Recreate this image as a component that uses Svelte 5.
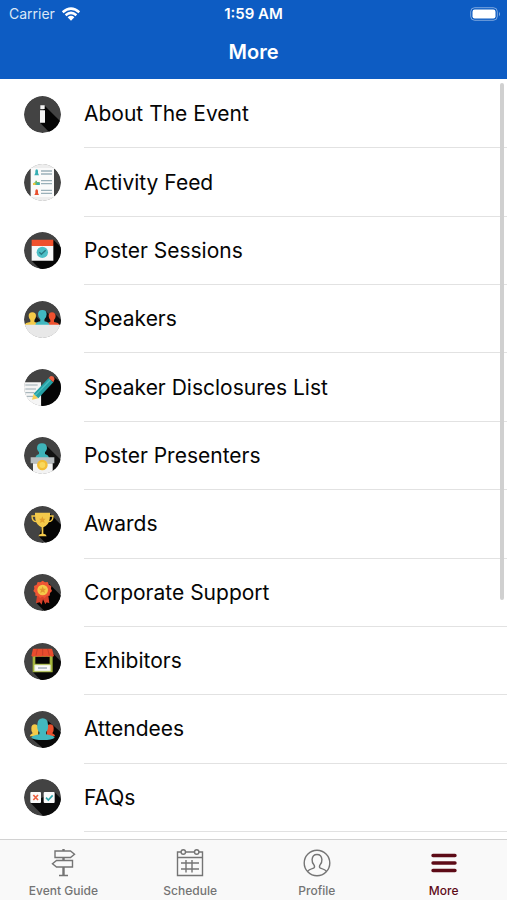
<script>
  const rows = [
    ['about', 'About The Event'],
    ['feed', 'Activity Feed'],
    ['sessions', 'Poster Sessions'],
    ['speakers', 'Speakers'],
    ['disclosures', 'Speaker Disclosures List'],
    ['presenters', 'Poster Presenters'],
    ['awards', 'Awards'],
    ['support', 'Corporate Support'],
    ['exhibitors', 'Exhibitors'],
    ['attendees', 'Attendees'],
    ['faqs', 'FAQs']
  ];
  const tabs = ['Event Guide', 'Schedule', 'Profile', 'More'];
</script>

{#snippet art(name)}
  {#if name === 'about'}
    <path d="M62 29L124 91L91 124L48 80Z" fill="#050505" />
    <path d="M49 28h13v11H49zM48 43h15v37H48z" fill="#f4f4f4" />
  {:else if name === 'feed'}
    <path d="M0 0h111v14H0zM0 97h111v14H0z" fill="#ededed" />
    <path d="M20 12h70v87H20z" fill="#fafafa" />
    <path d="M34 21q0-5 4-5t4 5v6l3 7H31l3-7z" fill="#35aeb4" />
    <path d="M27 63q0-9 7-8v-5h5v4h8v9z" fill="#6fb96a" />
    <path d="M27 63v-6h7v6z" fill="#f3c63f" />
    <path d="M38 56h9v7h-9z" fill="#35aeb4" />
    <path d="M34 81q0-5 4-5t4 5v6l3 6H31l3-6z" fill="#e8502f" />
    <path d="M51 21h33M51 30h33M51 50h33M51 59h33M51 79h33M51 88h33" stroke="#9ab0b9" stroke-width="4" />
  {:else if name === 'sessions'}
    <path d="M88 23L130 65V130H67L23 86Z" fill="#050505" />
    <path d="M23 41h65v45H23z" fill="#f7f7f7" />
    <path d="M23 23h65v19H23z" fill="#f0512d" />
    <circle cx="55" cy="61" r="17" fill="#4dbfc6" />
    <path d="M46 61l6 6l13-12" fill="none" stroke="#287780" stroke-width="4" />
  {:else if name === 'speakers'}
    <path d="M35 45l25 25H30zM65 30l40 40H60zM91 37l30 30v5H80z" fill="#111" />
    <path d="M2 72q1-7 17-9v-6q-5-5-5-12q0-11 11-11t11 11q0 7-5 12v6q13 2 14 9z" fill="#f5cb48" />
    <path d="M66 72q1-7 13-9v-6q-5-5-5-12q0-11 10-11t11 11q0 7-5 12v6q15 2 16 9z" fill="#ee512f" />
    <path d="M34 72q1-9 15-11v-6q-7-6-7-15q0-13 13-13t13 13q0 9-7 15v6q14 2 15 11z" fill="#41b8c0" />
    <path d="M0 71h111v40H0z" fill="#e8e8e8" />
  {:else if name === 'disclosures'}
    <path d="M90 25L130 55V130H52V70Z" fill="#050505" />
    <path d="M0 40h51v71H0z" fill="#f5f5f5" />
    <path d="M4 48h37M4 60h32M4 71h27M9 82h18" stroke="#9babb2" stroke-width="3" />
    <path d="M24 92l5-18l14 14z" fill="#f5ce58" />
    <path d="M29 74L74 27l14 13l-45 48z" fill="#24a0a4" />
    <path d="M34 79L79 32" stroke="#49bec1" stroke-width="4" />
    <path d="M74 27l5-5q10-3 13 8l-4 10z" fill="#ee6042" />
  {:else if name === 'presenters'}
    <path d="M66 25L125 83V111H86V64H60Z" fill="#111" />
    <path d="M34 63q1-9 11-12v-5q-6-6-6-12q0-15 15-15t15 15q0 6-6 12v5q11 3 12 12z" fill="#3eb3b9" />
    <path d="M27 79h59v32H27z" fill="#f3f3f3" />
    <path d="M20 61h71v18H20z" fill="#b9bec0" />
    <circle cx="55" cy="84" r="16" fill="#f3bd35" />
    <circle cx="55" cy="84" r="9" fill="#f9d85c" />
  {:else if name === 'awards'}
    <path d="M76 21L130 75V130H85L44 91L55 65Z" fill="#050505" />
    <path d="M35 30H24q0 17 14 17M75 30h12q0 17-14 17" fill="none" stroke="#f3c745" stroke-width="4" />
    <path d="M33 20h45v8q0 24-13 32l-7 4v19q9 1 10 8H43q1-7 10-8V64l-7-4Q33 52 33 28z" fill="#f4c94b" />
    <path d="M55 31l3 7h7l-5 5l2 8l-7-4l-7 4l2-8l-5-5h7z" fill="#e1a12e" />
  {:else if name === 'support'}
    <path d="M76 30L130 83V130H80L38 88Z" fill="#050505" />
    <path d="M40 58l-4 30l11-3l6 7l4-16l7 15l4-6l8 3l-4-31z" fill="#d8412a" />
    <path d="M56 20l7 5l8-1l3 8l8 4l-1 8l3 7l-6 6l-1 8l-9 1l-6 6l-7-4l-7 4l-5-6l-9-1v-8l-6-6l3-7l-1-8l8-4l3-8l8 1z" fill="#ef5534" />
    <circle cx="56" cy="48" r="16" fill="#f5ca49" />
    <path d="M56 37l3 7h8l-6 5l2 8l-7-4l-7 4l2-8l-6-5h8z" fill="#e19a2e" />
  {:else if name === 'exhibitors'}
    <path d="M88 32L130 75V130H68L27 88Z" fill="#080808" />
    <path d="M26 38h60v50H26z" fill="#a4b63c" />
    <path d="M34 41h43v21H34z" fill="#050505" />
    <path d="M31 65h49v20H31z" fill="#e9eedb" />
    <path d="M34 68h43v14H34z" fill="#fafafa" />
    <path d="M42 75h27" stroke="#a4afba" stroke-width="5" />
    <path d="M27 17h57l6 22q-5 5-11 0q-6 5-11 0q-6 5-12 0q-6 5-11 0q-6 5-11 0q-6 5-12 0z" fill="#e94c2e" />
    <path d="M40 18l-4 19M56 18v19M71 18l5 19" stroke="#c63d2a" stroke-width="3" />
  {:else if name === 'attendees'}
    <path d="M72 30L130 80V130H78L25 84Z" fill="#080808" />
    <path d="M17 76q2-6 9-9q-5-5-4-15q0-12 11-12q8 0 10 8v28z" fill="#f4ca48" />
    <path d="M94 76q-2-6-9-9q5-5 4-15q0-12-11-12q-8 0-10 8v28z" fill="#e9512f" />
    <path d="M22 80q2-6 24-10v-7q-8-7-6-22q1-19 16-19t16 19q2 15-6 22v7q23 4 26 10q-8 7-35 7t-35-7z" fill="#43b8be" />
  {:else}
    <path d="M92 40L130 78V130H77L19 71Z" fill="#0b0b0b" />
    <rect x="19" y="39" width="32" height="33" rx="3" fill="#fafafa" />
    <rect x="59" y="39" width="33" height="33" rx="3" fill="#fafafa" />
    <path d="M28 48l14 15M42 48L28 63" stroke="#ed6040" stroke-width="5" />
    <path d="M66 56l7 7l13-14" fill="none" stroke="#35a7ac" stroke-width="5" />
  {/if}
{/snippet}

<div class="screen">
  <header>
    <div class="status">
      <span class="carrier">Carrier
        <svg width="20" height="14" viewBox="0 0 20 14" aria-hidden="true">
          <path d="M1.7 5.2Q10-2 18.3 5.2M4.6 8.2Q10 3.6 15.4 8.2" fill="none" stroke="#fff" stroke-width="2.5" />
          <path d="M6.6 10.3Q10 7.4 13.4 10.3L10 13.7Z" fill="#fff" />
        </svg>
      </span>
      <time>1:59 AM</time>
      <svg class="battery" width="31" height="14" viewBox="0 0 31 14" aria-hidden="true">
        <rect x=".7" y=".7" width="26.6" height="12.6" rx="4" fill="none" stroke="#fff" stroke-opacity=".45" />
        <rect x="2.5" y="2.5" width="23" height="9" rx="2.2" fill="#fff" />
        <path d="M29 4.7q2 2.3 0 4.6z" fill="#fff" fill-opacity=".5" />
      </svg>
    </div>
    <h1>More</h1>
  </header>

  <main>
    <ul>
      {#each rows as [name, label]}
        <li>
          <a href="#{name}">
            <svg class="badge" viewBox="0 0 111 111" aria-hidden="true">
              <circle cx="55.5" cy="55.5" r="55.5" fill="#434343" />
              {@render art(name)}
            </svg>
            <span>{label}</span>
          </a>
        </li>
      {/each}
    </ul>
    <div class="thumb"></div>
  </main>

  <nav>
    {#each tabs as tab, i}
      <a href="#tab-{i}" class:active={i === 3}>
        <svg width="30" height="30" viewBox="0 0 30 30" fill="none" stroke="currentColor" stroke-width="1.4" aria-hidden="true">
          {#if i === 0}
            <path d="M11 27.500h9M7 3h15.500l4 3.200l-4 3.300H7zM24.500 12.500H8.500l-4 3.200L8.500 19h16z" />
            <path d="M15.500 1v2M15.500 9.500v3M15.500 19v8.500" stroke-width="2.400" />
          {:else if i === 1}
            <path d="M6 4H2.500v23.500h25V4H24M10.500 4h9M2.500 9.500h25M6 15h18M6 21h18M11 12v12.500M17 12v12.500" />
            <circle cx="8.300" cy="4" r="2.200" /><circle cx="21.700" cy="4" r="2.200" />
          {:else if i === 2}
            <circle cx="15" cy="15" r="12.800" />
            <path d="M5.500 23.500q1-1.500 6-3.300q1.500-.6.8-2.700Q9.800 15 10.100 11.500Q10.500 6.500 15 6.500t4.900 5q.3 3.500-2.200 6q-.7 2.100.8 2.700q5 1.800 6 3.300" />
          {:else}
            <path d="M4 7.500h22M4 15h22M4 22.500h22" stroke-width="3.400" stroke-linecap="round" />
          {/if}
        </svg>
        <span>{tab}</span>
      </a>
    {/each}
  </nav>
</div>

<style>
  :global(body) { margin: 0; background: #fff; }
  .screen {
    min-height: 100vh;
    display: flex;
    flex-direction: column;
    font-family: Inter, Roboto, sans-serif;
    color: #050505;
  }
  a { color: inherit; text-decoration: none; }
  svg { display: block; }
  header {
    height: 79px;
    background: #0d5cc3;
    color: #fff;
  }
  .status {
    display: grid;
    grid-template-columns: 1fr auto 1fr;
    align-items: center;
    height: 27px;
    padding: 0 6px;
    font-size: 14px;
  }
  .carrier { display: flex; align-items: center; gap: 6px; padding-left: 3px; color: #dbe7f6; }
  time { font-size: 15px; font-weight: 600; }
  .battery { justify-self: end; }
  h1 {
    margin: 0;
    font-size: 20px;
    line-height: 50px;
    font-weight: 600;
    text-align: center;
  }
  main {
    position: relative;
    flex: 1;
    display: flex;
    padding: 1px 0 7px;
  }
  ul {
    flex: 1;
    display: flex;
    flex-direction: column;
    margin: 0;
    padding: 0;
    list-style: none;
  }
  li { flex: 1; min-height: 68px; display: flex; }
  li a { flex: 1; display: flex; align-items: center; padding-left: 24px; }
  .badge { width: 37px; height: 37px; margin-right: 23px; border-radius: 50%; }
  li span {
    flex: 1;
    align-self: stretch;
    display: flex;
    align-items: center;
    border-bottom: 1px solid #e2e2e2;
    font-size: 21px;
  }
  .thumb {
    position: absolute;
    top: 4px;
    right: 3px;
    width: 4px;
    height: 68%;
    border-radius: 2px;
    background: #d0d0d0;
  }
  nav {
    display: grid;
    grid-template-columns: repeat(4, 1fr);
    height: 60px;
    border-top: 1px solid #d2d2d2;
    background: #f9f9f9;
    color: #747474;
  }
  nav a {
    display: flex;
    flex-direction: column;
    align-items: center;
    padding-top: 8px;
    gap: 5px;
    font-size: 12px;
    line-height: 16px;
    font-weight: 500;
  }
  nav a.active { color: #5d0b17; }
</style>
